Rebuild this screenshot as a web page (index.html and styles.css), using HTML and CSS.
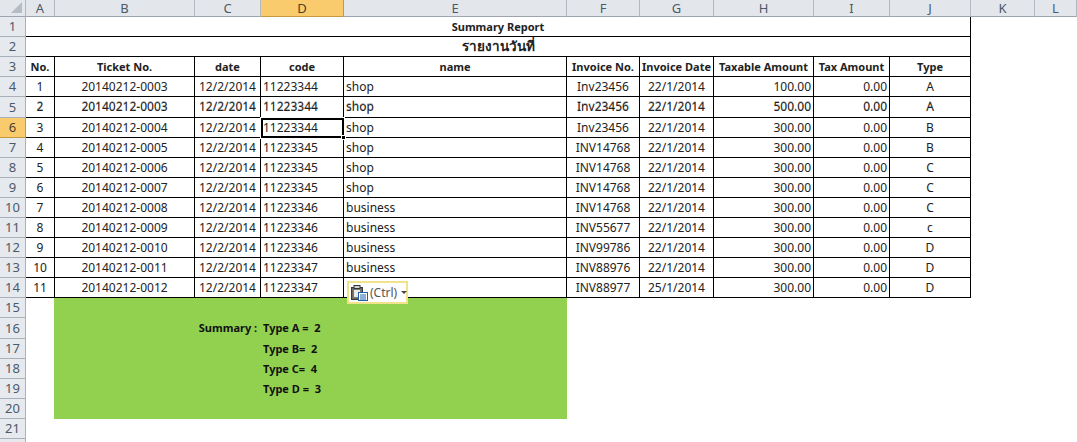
FILE: index.html
```html
<!DOCTYPE html>
<html lang="en">
<head>
<meta charset="utf-8">
<title>Summary Report</title>
<link rel="stylesheet" href="styles.css">
</head>
<body>
<table class="sheet">
<colgroup>
<col class="w-head"><col class="w-a"><col class="w-b"><col class="w-c"><col class="w-d"><col class="w-e"><col class="w-f"><col class="w-g"><col class="w-h"><col class="w-i"><col class="w-j"><col class="w-k"><col class="w-l">
</colgroup>
<thead>
<tr class="letters"><th class="corner"><span class="tri"></span></th><th>A</th><th>B</th><th>C</th><th class="on">D</th><th>E</th><th>F</th><th>G</th><th>H</th><th>I</th><th>J</th><th>K</th><th>L</th></tr>
</thead>
<tbody>
<tr><th>1</th><td colspan="10" class="ln ctr bold title">Summary Report</td><td></td><td></td></tr>
<tr><th>2</th><td colspan="10" class="ln ctr bold thai">รายงานวันที่</td><td></td><td></td></tr>
<tr><th>3</th><td class="ln ctr bold">No.</td><td class="ln ctr bold">Ticket No.</td><td class="ln ctr bold">date</td><td class="ln ctr bold">code</td><td class="ln ctr bold">name</td><td class="ln ctr bold">Invoice No.</td><td class="ln ctr bold">Invoice Date</td><td class="ln ctr bold">Taxable Amount</td><td class="ln ctr bold">Tax Amount</td><td class="ln ctr bold">Type</td><td></td><td></td></tr>
<tr><th>4</th><td class="ln ctr">1</td><td class="ln ctr">20140212-0003</td><td class="ln ctr">12/2/2014</td><td class="ln">11223344</td><td class="ln">shop</td><td class="ln ctr">Inv23456</td><td class="ln ctr">22/1/2014</td><td class="ln rgt">100.00</td><td class="ln rgt">0.00</td><td class="ln ctr">A</td><td></td><td></td></tr>
<tr class="tall twice"><th>5</th><td class="ln ctr">2</td><td class="ln ctr">20140212-0003</td><td class="ln ctr">12/2/2014</td><td class="ln">11223344</td><td class="ln">shop</td><td class="ln ctr">Inv23456</td><td class="ln ctr">22/1/2014</td><td class="ln rgt">500.00</td><td class="ln rgt">0.00</td><td class="ln ctr">A</td><td></td><td></td></tr>
<tr><th class="on">6</th><td class="ln ctr">3</td><td class="ln ctr">20140212-0004</td><td class="ln ctr">12/2/2014</td><td class="ln active">11223344<span class="handle"></span></td><td class="ln">shop</td><td class="ln ctr">Inv23456</td><td class="ln ctr">22/1/2014</td><td class="ln rgt">300.00</td><td class="ln rgt">0.00</td><td class="ln ctr">B</td><td></td><td></td></tr>
<tr><th>7</th><td class="ln ctr">4</td><td class="ln ctr">20140212-0005</td><td class="ln ctr">12/2/2014</td><td class="ln">11223345</td><td class="ln">shop</td><td class="ln ctr">INV14768</td><td class="ln ctr">22/1/2014</td><td class="ln rgt">300.00</td><td class="ln rgt">0.00</td><td class="ln ctr">B</td><td></td><td></td></tr>
<tr><th>8</th><td class="ln ctr">5</td><td class="ln ctr">20140212-0006</td><td class="ln ctr">12/2/2014</td><td class="ln">11223345</td><td class="ln">shop</td><td class="ln ctr">INV14768</td><td class="ln ctr">22/1/2014</td><td class="ln rgt">300.00</td><td class="ln rgt">0.00</td><td class="ln ctr">C</td><td></td><td></td></tr>
<tr><th>9</th><td class="ln ctr">6</td><td class="ln ctr">20140212-0007</td><td class="ln ctr">12/2/2014</td><td class="ln">11223345</td><td class="ln">shop</td><td class="ln ctr">INV14768</td><td class="ln ctr">22/1/2014</td><td class="ln rgt">300.00</td><td class="ln rgt">0.00</td><td class="ln ctr">C</td><td></td><td></td></tr>
<tr><th>10</th><td class="ln ctr">7</td><td class="ln ctr">20140212-0008</td><td class="ln ctr">12/2/2014</td><td class="ln">11223346</td><td class="ln">business</td><td class="ln ctr">INV14768</td><td class="ln ctr">22/1/2014</td><td class="ln rgt">300.00</td><td class="ln rgt">0.00</td><td class="ln ctr">C</td><td></td><td></td></tr>
<tr><th>11</th><td class="ln ctr">8</td><td class="ln ctr">20140212-0009</td><td class="ln ctr">12/2/2014</td><td class="ln">11223346</td><td class="ln">business</td><td class="ln ctr">INV55677</td><td class="ln ctr">22/1/2014</td><td class="ln rgt">300.00</td><td class="ln rgt">0.00</td><td class="ln ctr">c</td><td></td><td></td></tr>
<tr><th>12</th><td class="ln ctr">9</td><td class="ln ctr">20140212-0010</td><td class="ln ctr">12/2/2014</td><td class="ln">11223346</td><td class="ln">business</td><td class="ln ctr">INV99786</td><td class="ln ctr">22/1/2014</td><td class="ln rgt">300.00</td><td class="ln rgt">0.00</td><td class="ln ctr">D</td><td></td><td></td></tr>
<tr><th>13</th><td class="ln ctr">10</td><td class="ln ctr">20140212-0011</td><td class="ln ctr">12/2/2014</td><td class="ln">11223347</td><td class="ln">business</td><td class="ln ctr">INV88976</td><td class="ln ctr">22/1/2014</td><td class="ln rgt">300.00</td><td class="ln rgt">0.00</td><td class="ln ctr">D</td><td></td><td></td></tr>
<tr><th>14</th><td class="ln ctr">11</td><td class="ln ctr">20140212-0012</td><td class="ln ctr">12/2/2014</td><td class="ln">11223347</td><td class="ln paste-host"><div class="paste"><svg class="clip" width="17" height="16" viewBox="0 0 17 16"><rect x="0.5" y="2.5" width="11" height="12" fill="#6f6a60" stroke="#3a3a3a"/><rect x="3" y="0.5" width="6" height="3" fill="#cfd3d8" stroke="#333"/><rect x="2.5" y="4.5" width="7" height="8" fill="#eceae4" stroke="#777"/><rect x="7.5" y="7.5" width="9" height="8" fill="#fff" stroke="#1f5fa8"/><path d="M9 10h6M9 12h6M9 14h6" stroke="#1f5fa8"/></svg><span>(Ctrl)</span><span class="caret"></span></div></td><td class="ln ctr">INV88977</td><td class="ln ctr">25/1/2014</td><td class="ln rgt">300.00</td><td class="ln rgt">0.00</td><td class="ln ctr">D</td><td></td><td></td></tr>
<tr><th>15</th><td></td><td class="green first"></td><td class="green"></td><td class="green"></td><td class="green"></td><td colspan="7"></td></tr>
<tr class="tall"><th>16</th><td></td><td class="green first"></td><td class="green bold ctr">Summary :</td><td class="green bold">Type A =&nbsp; 2</td><td class="green"></td><td colspan="7"></td></tr>
<tr><th>17</th><td></td><td class="green first"></td><td class="green"></td><td class="green bold">Type B=&nbsp; 2</td><td class="green"></td><td colspan="7"></td></tr>
<tr><th>18</th><td></td><td class="green first"></td><td class="green"></td><td class="green bold">Type C=&nbsp; 4</td><td class="green"></td><td colspan="7"></td></tr>
<tr><th>19</th><td></td><td class="green first"></td><td class="green"></td><td class="green bold">Type D =&nbsp; 3</td><td class="green"></td><td colspan="7"></td></tr>
<tr><th>20</th><td></td><td class="green first"></td><td class="green"></td><td class="green"></td><td class="green"></td><td colspan="7"></td></tr>
<tr><th>21</th><td colspan="12"></td></tr>
<tr><th></th><td colspan="12"></td></tr>
</tbody>
</table>
</body>
</html>
```
FILE: styles.css
```css
html, body {
  margin: 0;
  padding: 0;
  background: #fff;
  overflow: hidden;
}
.sheet {
  table-layout: fixed;
  width: 1077px;
  border-collapse: separate;
  border-spacing: 0;
  font: 12px/1 "Noto Sans", "Open Sans", sans-serif;
  color: #222;
}
.w-head { width: 26px; }
.w-a { width: 29px; }
.w-b { width: 140px; }
.w-c { width: 66px; }
.w-d { width: 83px; }
.w-e { width: 223px; }
.w-f { width: 73px; }
.w-g { width: 74px; }
.w-h { width: 100px; }
.w-i { width: 76px; }
.w-j { width: 81px; }
.w-k { width: 64px; }
.w-l { width: 42px; }

tr { height: 20px; }
tr.tall { height: 21px; }
thead tr { height: 17px; }

th {
  box-sizing: border-box;
  padding: 0;
  background: #e6e9ee;
  border-right: 1px solid #a9b0b9;
  border-bottom: 1px solid #a9b0b9;
  color: #4c5a68;
  font-weight: 400;
  font-size: 13px;
  text-align: center;
  overflow: hidden;
}
.letters th {
  background: #e3e6eb;
  border-right-color: #b4b9c1;
  border-bottom-color: #9da4ae;
}
th.on {
  background: #f9cb6c;
  color: #4a4030;
  border-bottom-color: #c49a3e;
  border-right-color: #c49a3e;
}
.corner { position: relative; }
.tri {
  position: absolute;
  right: 3px;
  bottom: 3px;
  border-style: solid;
  border-width: 0 0 11px 11px;
  border-color: transparent transparent #b6bcc4 transparent;
}
td {
  box-sizing: border-box;
  padding: 0 2px;
  white-space: nowrap;
  overflow: visible;
}
td.ln {
  border-right: 1px solid #000;
  border-bottom: 1px solid #000;
}
.ctr { text-align: center; }
.rgt { text-align: right; }
.bold { font-weight: 700; font-size: 11px; }
.thai { font-size: 13.5px; }
.twice td { text-shadow: 0 -1px 0 rgba(0, 0, 0, 0.3); }
.green {
  background: #92d14f;
  color: #111;
  padding-bottom: 2px;
}
.green.first { box-shadow: -1px 0 0 #92d14f; }
.active {
  position: relative;
  outline: 2px solid #000;
  outline-offset: -2px;
  box-shadow: 0 0 0 1px #fff;
}
.handle {
  position: absolute;
  right: -3px;
  bottom: -3px;
  width: 5px;
  height: 5px;
  background: #000;
  border: 1px solid #fff;
  box-sizing: border-box;
}
.paste-host { position: relative; }
.paste {
  position: absolute;
  left: 3px;
  top: 3px;
  z-index: 2;
  display: flex;
  align-items: center;
  gap: 2px;
  box-sizing: border-box;
  width: 61px;
  height: 23px;
  padding: 0 2px;
  background: #fff;
  border: 2px solid #f3e28c;
  color: #555;
  font-size: 12px;
}
.clip { flex: none; }
.caret {
  margin-left: 2px;
  border-style: solid;
  border-width: 3px 3px 0 3px;
  border-color: #444 transparent transparent transparent;
}
```
